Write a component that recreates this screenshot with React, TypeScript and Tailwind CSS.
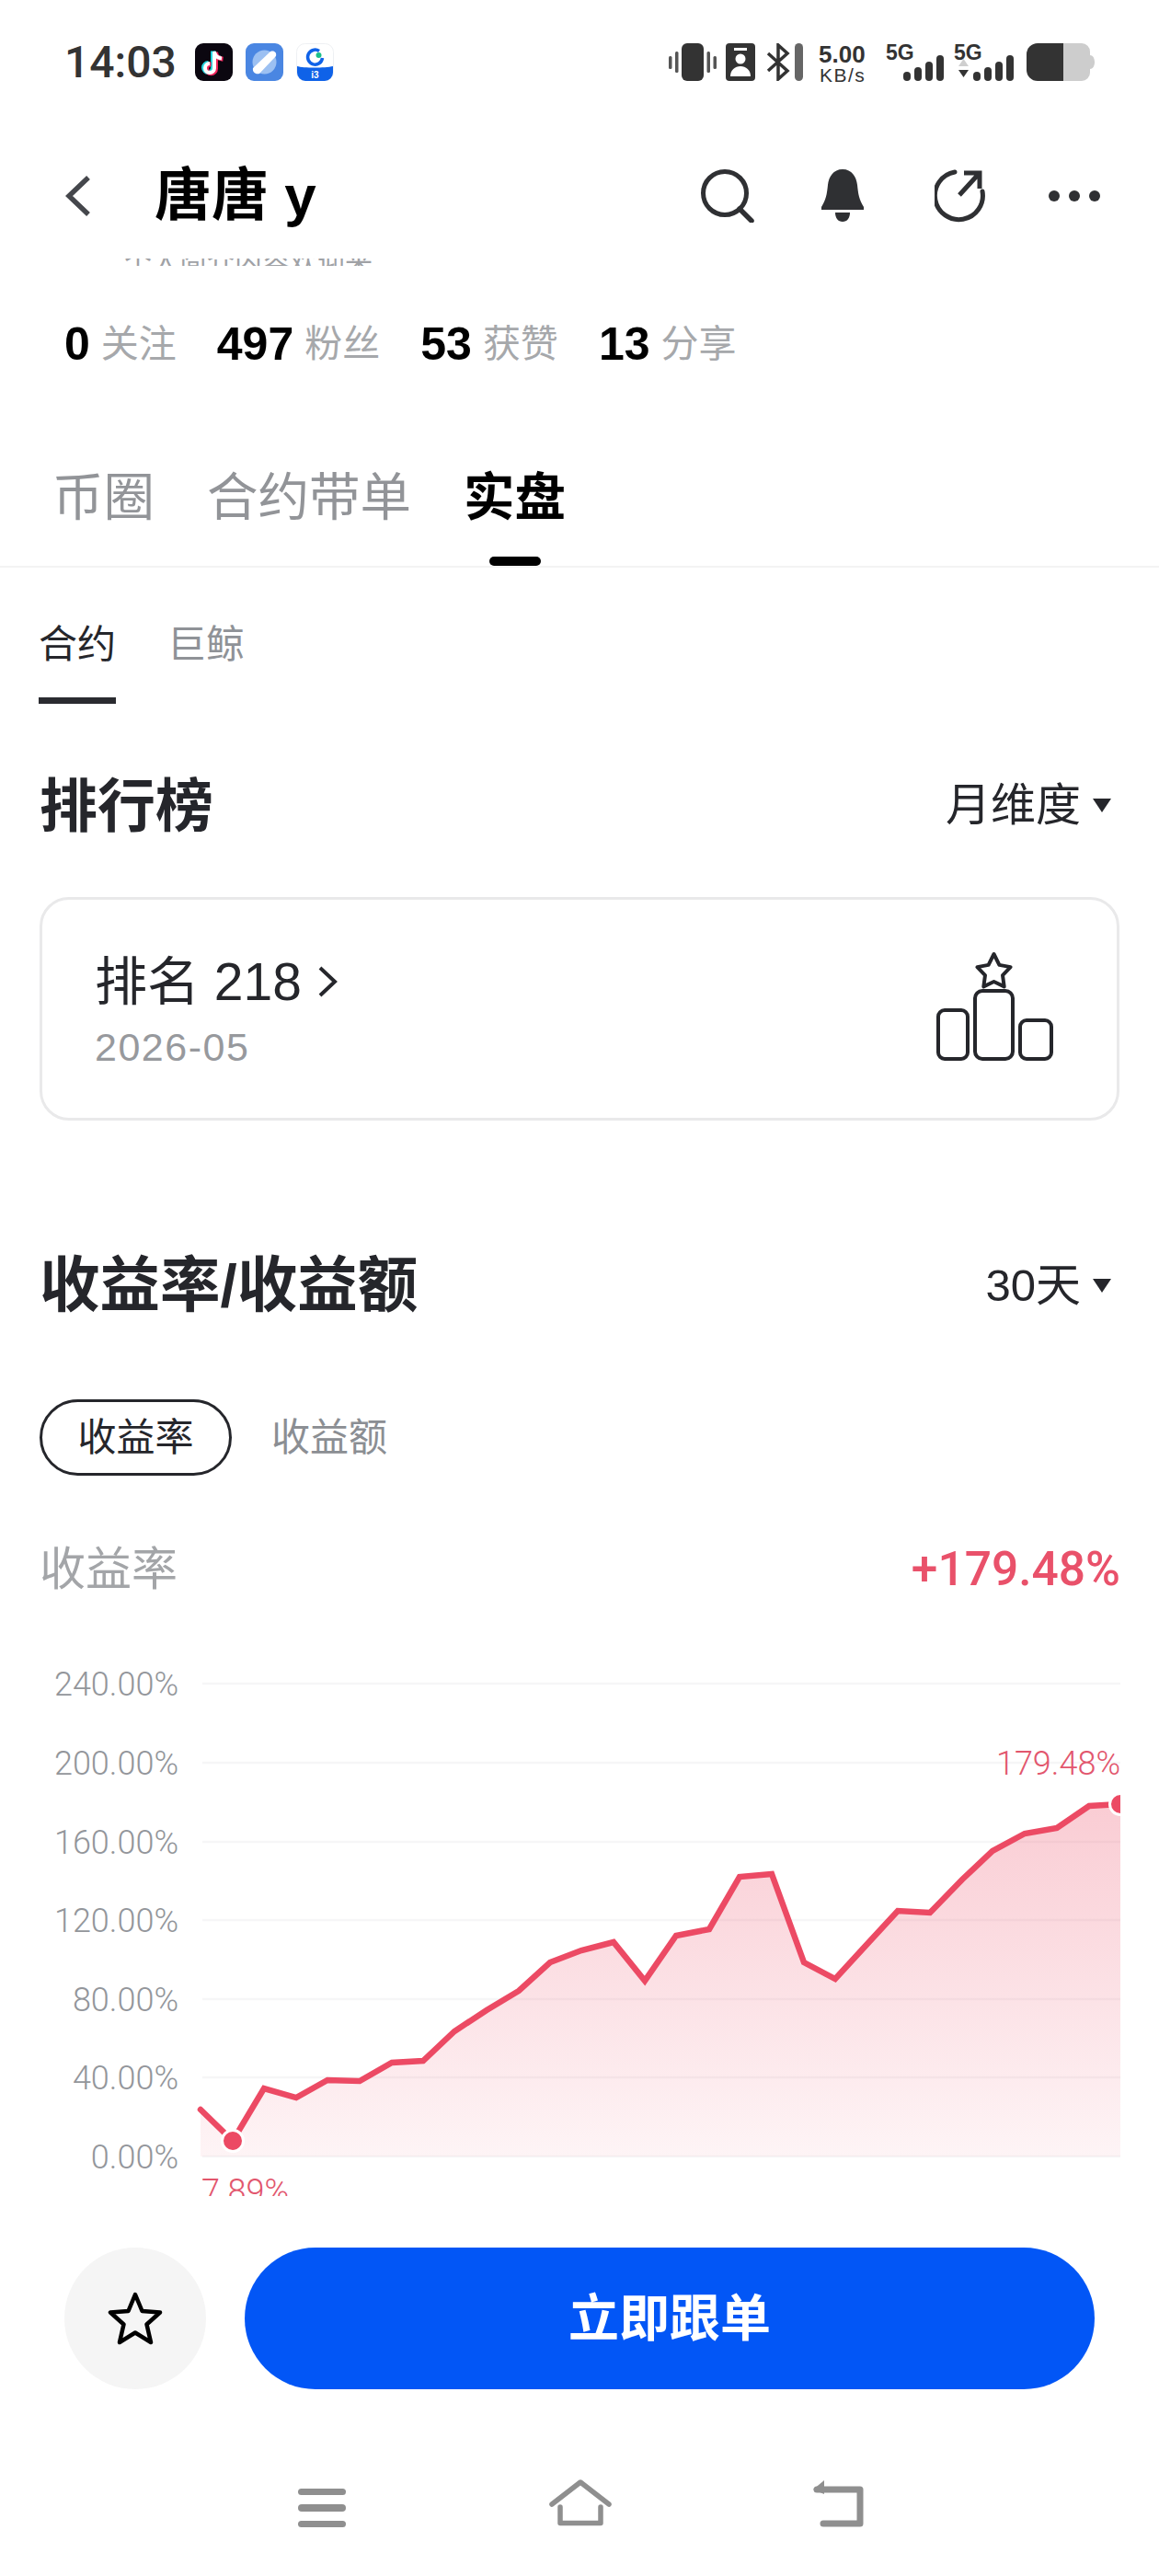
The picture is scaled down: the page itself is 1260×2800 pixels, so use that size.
import type { ReactNode } from 'react';

const points: [number, number][] = [
  [218, 2293], [253, 2327], [287, 2270], [322, 2280], [356, 2261], [391, 2262], [426, 2242], [460, 2240],
  [494, 2208], [529, 2185], [564, 2164], [598, 2133], [632, 2120], [667, 2111], [701, 2153], [735, 2104],
  [771, 2097], [804, 2040], [839, 2037], [874, 2133], [908, 2151], [941, 2115], [976, 2077], [1011, 2079],
  [1046, 2043], [1079, 2012], [1114, 1993], [1149, 1987], [1184, 1963], [1218, 1961],
];

const axis: [string, number][] = [
  ['240.00%', 1830], ['200.00%', 1916], ['160.00%', 2002], ['120.00%', 2087],
  ['80.00%', 2173], ['40.00%', 2258], ['0.00%', 2344],
];

function Chart() {
  const line = points.map((p) => p.join(',')).join(' ');
  const area = `218,2344 ${line} 1218,2344`;
  return (
    <svg width={1260} height={587} viewBox="0 1800 1260 587" className="block">
      <defs>
        <linearGradient id="area" gradientUnits="userSpaceOnUse" x1="0" y1="1961" x2="0" y2="2344">
          <stop offset="0" stopColor="#ec4a64" stopOpacity="0.28" />
          <stop offset="1" stopColor="#ec4a64" stopOpacity="0.06" />
        </linearGradient>
        <clipPath id="plot">
          <rect x="200" y="1800" width="1018" height="587" />
        </clipPath>
      </defs>
      {axis.map(([label, y]) => (
        <g key={label}>
          <line x1="220" x2="1218" y1={y} y2={y} stroke="#f6f6f7" strokeWidth="2.5" />
          <text x="194" y={y + 13} textAnchor="end" fontFamily="Roboto, sans-serif" fontWeight="300" fontSize="36" fill="#93969b">
            {label}
          </text>
        </g>
      ))}
      <polygon points={area} fill="url(#area)" />
      <g clipPath="url(#plot)">
        <polyline points={line} fill="none" stroke="#ec4a64" strokeWidth="6.5" strokeLinejoin="miter" strokeLinecap="round" />
        <circle cx="253" cy="2327" r="11.5" fill="#ec4a64" stroke="#fff" strokeWidth="3" />
        <circle cx="1218" cy="1961" r="11.5" fill="#ec4a64" stroke="#fff" strokeWidth="3" />
      </g>
      <text x="1218" y="1929" textAnchor="end" fontFamily="Roboto, sans-serif" fontWeight="300" fontSize="36" fill="#e2566d">
        179.48%
      </text>
      <text x="219" y="2394" fontFamily="Roboto, sans-serif" fontWeight="300" fontSize="36" fill="#e2566d">
        7.89%
      </text>
    </svg>
  );
}

function AppIcons() {
  return (
    <div className="flex gap-[14px] ml-[20px]">
      <svg width="41" height="41" viewBox="0 0 41 41">
        <rect width="41" height="41" rx="9" fill="#0b0710" />
        <path d="M21 9v18a5 5 0 1 1-5-5M21 9c.5 4.500 3.500 7 8 7.500" fill="none" stroke="#25d6e0" strokeWidth="5" transform="translate(-1.500 -.5)" />
        <path d="M21 9v18a5 5 0 1 1-5-5M21 9c.5 4.500 3.500 7 8 7.500" fill="none" stroke="#f0245c" strokeWidth="5" transform="translate(1.500 .8)" />
        <path d="M21 9v18a5 5 0 1 1-5-5M21 9c.5 4.500 3.500 7 8 7.500" fill="none" stroke="#fff" strokeWidth="4" />
      </svg>
      <svg width="41" height="41" viewBox="0 0 41 41">
        <rect width="41" height="41" rx="9" fill="#4a86e2" />
        <circle cx="20.500" cy="20.500" r="13" fill="#9cc0f2" />
        <path d="M8 27 27 9c4-1.500 7 1 6 5L15 33c-4 1.500-8-2-7-6Z" fill="#fff" />
      </svg>
      <svg width="41" height="41" viewBox="0 0 41 41">
        <rect x=".5" y=".5" width="40" height="40" rx="9" fill="#fff" stroke="#eef0f3" />
        <path d="M1 25c7 2 30 2 39 0v7a9 9 0 0 1-9 9H10a9 9 0 0 1-9-9Z" fill="#0f62e8" />
        <path d="M25 8.500a8 8 0 1 0 3.500 7.500" fill="none" stroke="#0f62e8" strokeWidth="3.500" />
        <circle cx="24.500" cy="13" r="3" fill="#1cc08a" />
        <text x="20.500" y="38" textAnchor="middle" fontSize="10" fontWeight="700" fill="#fff" fontFamily="Liberation Sans, sans-serif">i3</text>
      </svg>
    </div>
  );
}

function Bars({ up }: { up?: boolean }) {
  return (
    <svg width="62" height="28" viewBox="0 0 62 28">
      {up && <path d="M1 12h11L6.500 4Z" fill="#cfcfcf" />}
      {up && <path d="M1 16h11l-5.500 8Z" fill="#333" />}
      <rect x="17" y="18" width="8" height="10" rx="4" fill="#333" />
      <rect x="29" y="13" width="8" height="15" rx="4" fill="#333" />
      <rect x="41" y="7" width="8" height="21" rx="4" fill="#333" />
      <rect x="53" y="0" width="8" height="28" rx="4" fill="#333" />
    </svg>
  );
}

function Signal({ up, shift, textLeft }: { up?: boolean; shift: string; textLeft: string }) {
  return (
    <div className={`relative w-[66px] h-[41px] ${shift}`}>
      <span className={`absolute top-[-2px] text-[23px] leading-[24px] font-bold text-[#333] ${textLeft}`}>5G</span>
      <div className="absolute right-0 bottom-0">
        <Bars up={up} />
      </div>
    </div>
  );
}

function StatusBar() {
  return (
    <div className="h-[148px] pt-[47px] pl-[70px] pr-[70px] flex items-start justify-between">
      <div className="flex items-center h-[41px]">
        <span className="text-[48px] leading-[41px] font-medium text-[#333] font-['Roboto',sans-serif]">14:03</span>
        <AppIcons />
      </div>
      <div className="flex items-start h-[41px]">
        <svg width="52" height="41" viewBox="0 0 52 41">
          <rect x="14" y="0" width="24" height="41" rx="6" fill="#333" />
          <rect x="0" y="14" width="3.500" height="14" rx="1.500" fill="#555" />
          <rect x="7" y="9" width="3.500" height="23" rx="1.500" fill="#555" />
          <rect x="41.500" y="9" width="3.500" height="23" rx="1.500" fill="#555" />
          <rect x="48.500" y="14" width="3.500" height="14" rx="1.500" fill="#555" />
        </svg>
        <svg width="32" height="41" viewBox="0 0 32 41" className="ml-[10px]">
          <rect width="32" height="41" rx="4" fill="#333" />
          <rect x="9" y="5" width="14" height="3" fill="#fff" />
          <circle cx="16" cy="17" r="5.500" fill="#fff" />
          <path d="M5 36c0-7 5-11 11-11s11 4 11 11Z" fill="#fff" />
        </svg>
        <svg width="40" height="41" viewBox="0 0 40 41" className="ml-[12px]">
          <path d="M2 11 23 30 13 39V2l10 9L2 30" fill="none" stroke="#333" strokeWidth="3.500" />
          <rect x="31" y="0" width="9" height="41" rx="4.500" fill="#666" />
        </svg>
        <div className="ml-[17px] w-[56px] text-[#333]">
          <div className="text-[26px] leading-[24px] font-bold">5.00</div>
          <div className="text-[21px] leading-[20px] tracking-[1.5px] mt-[1px] ml-[1px] whitespace-nowrap">KB/s</div>
        </div>
        <Signal shift="ml-[15px]" textLeft="left-[2px]" />
        <Signal up shift="ml-[10px]" textLeft="left-0" />
        <svg width="74" height="41" viewBox="0 0 74 41" className="ml-[13px]">
          <path d="M40 0h20a9 9 0 0 1 9 9v4c3 0 5 3 5 7.500S72 28 69 28v4a9 9 0 0 1-9 9H40Z" fill="#cdcdcd" />
          <path d="M12 0h28v41H12A12 12 0 0 1 0 29V12A12 12 0 0 1 12 0Z" fill="#333" />
        </svg>
      </div>
    </div>
  );
}

function NavBar() {
  return (
    <div className="h-[130px] pl-[70px] pr-[64px] flex items-center">
      <svg width="30" height="46" viewBox="0 0 30 46">
        <path d="M26 3 5 23l21 20" fill="none" stroke="#45474c" strokeWidth="5.500" />
      </svg>
      <div className="ml-[68px] text-[62px] leading-[70px] font-bold text-black">唐唐 y</div>
      <div className="ml-auto flex items-center">
        <svg width="60" height="58" viewBox="0 0 60 58">
          <circle cx="27" cy="26" r="23.500" fill="none" stroke="#2f3033" strokeWidth="5" />
          <path d="M43 43 56 56" stroke="#2f3033" strokeWidth="5.500" strokeLinecap="round" />
        </svg>
        <svg width="52" height="58" viewBox="0 0 52 58" className="ml-[69px]">
          <path d="M26 0c10 0 15 8 16 17 1 10 2 16 7 24v3H3v-3c5-8 6-14 7-24C11 8 16 0 26 0Z" fill="#2f3033" />
          <path d="M18 47h16c0 6-3 10-8 10s-8-4-8-10Z" fill="#2f3033" />
        </svg>
        <svg width="60" height="58" viewBox="0 0 60 58" className="ml-[74px]">
          <path d="M52 24a26 26 0 1 1-30-21" fill="none" stroke="#2f3033" strokeWidth="5" strokeLinecap="round" />
          <path d="M27 28 48 5M32 4h17v17" fill="none" stroke="#2f3033" strokeWidth="5" />
        </svg>
        <div className="ml-[64px] flex gap-[10px]">
          <span className="w-[12px] h-[12px] rounded-full bg-[#2f3033]" />
          <span className="w-[12px] h-[12px] rounded-full bg-[#2f3033]" />
          <span className="w-[12px] h-[12px] rounded-full bg-[#2f3033]" />
        </div>
      </div>
    </div>
  );
}

function Stat({ num, label }: { num: string; label: string }) {
  return (
    <div className="flex items-center gap-[12px]">
      <span className="text-[50px] leading-[60px] font-bold text-black">{num}</span>
      <span className="text-[41px] leading-[60px] text-[#a6a8ab]">{label}</span>
    </div>
  );
}

function SectionHead({ title, size, right }: { title: string; size: string; right: ReactNode }) {
  return (
    <div className="h-[60px] pl-[43px] pr-[52px] flex items-center justify-between">
      <div className={`${size} leading-[60px] font-bold text-[#25262b]`}>{title}</div>
      <div className="flex items-center gap-[13px] pb-[2px] text-[49px] leading-[60px] text-[#25262b]">
        {right}
        <span className="w-0 h-0 border-x-[10px] border-x-transparent border-t-[15px] border-t-[#25262b]" />
      </div>
    </div>
  );
}

export default function App() {
  return (
    <div className="w-[1260px] h-[2800px] overflow-hidden bg-white font-['Liberation_Sans','Noto_Sans_CJK_SC',sans-serif]">
      <StatusBar />
      <NavBar />

      {/* profile text scrolled under the nav, only the bottom shows */}
      <div className="mt-[3px] h-[8px] overflow-hidden pl-[135px] flex items-end">
        <div className="text-[30px] leading-[8px] text-[#a0a2a6] whitespace-nowrap">个人简介内容欢迎来</div>
      </div>

      <div className="h-[169px] pl-[70px] flex items-center gap-[44px]">
        <Stat num="0" label="关注" />
        <Stat num="497" label="粉丝" />
        <Stat num="53" label="获赞" />
        <Stat num="13" label="分享" />
      </div>

      <div className="relative h-[159px] pt-[53px] pl-[57px] border-b-[2px] border-b-[#f3f3f3] flex items-start gap-[57px] text-[55.500px] leading-[60px] text-[#929498]">
        <span>币圈</span>
        <span>合约带单</span>
        <span className="font-bold text-black">实盘</span>
        <span className="absolute left-[532px] bottom-0 w-[56px] h-[10px] rounded-full bg-black" />
      </div>

      <div className="h-[148px] pl-[42px] flex items-start gap-[56px] text-[42px] leading-[60px]">
        <span className="h-[148px] pt-[54px] border-b-[7px] border-b-[#2a2b30] text-[#25262b]">合约</span>
        <span className="pt-[54px] text-[#8f9297]">巨鲸</span>
      </div>

      <div className="mt-[81px]">
        <SectionHead title="排行榜" size="text-[63px]" right="月维度" />
      </div>

      <div className="mt-[69px] mx-[43px] h-[243px] rounded-[32px] border-[3px] border-[#e9e9ea] pl-[57px] pr-[68px] flex items-center justify-between">
        <div>
          <div className="flex items-center mt-[3px] text-[57px] leading-[66px] text-[#25262b]">
            <span>排名 218</span>
            <svg width="24" height="34" viewBox="0 0 24 34" className="ml-[16px]">
              <path d="M4 2 20 17 4 32" fill="none" stroke="#25262b" strokeWidth="4" />
            </svg>
          </div>
          <div className="mt-[14px] text-[43px] leading-[48px] tracking-[1.5px] text-[#97999d]">2026-05</div>
        </div>
        <svg width="128" height="120" viewBox="0 0 128 120" className="mt-[-7px]">
          <g fill="none" stroke="#25262b" strokeWidth="4">
            <rect x="2" y="65" width="32" height="53" rx="7" />
            <rect x="42" y="44" width="41" height="74" rx="8" />
            <rect x="91" y="76" width="34" height="42" rx="7" />
            <path d="M62.500 4 68.400 15.900 80.600 18.100 72 27.100 73.700 39.400 62.500 34 51.300 39.400 53 27.100 44.400 18.100 56.600 15.900Z" strokeLinejoin="round" />
          </g>
        </svg>
      </div>

      <div className="mt-[150px]">
        <SectionHead title="收益率/收益额" size="text-[65.500px]" right="30天" />
      </div>

      <div className="mt-[93px] pl-[43px] flex items-center gap-[43px] text-[42px] leading-[50px]">
        <span className="h-[83px] w-[209px] rounded-full border-[3px] border-[#25262b] flex items-center justify-center text-[#25262b]">收益率</span>
        <span className="text-[#8b8e93]">收益额</span>
      </div>

      <div className="mt-[72px] h-[60px] pl-[43px] pr-[42px] flex items-center justify-between">
        <span className="text-[50px] leading-[60px] text-[#a3a5a8]">收益率</span>
        <span className="text-[51.500px] leading-[60px] font-medium text-[#e9516a] font-['Roboto',sans-serif]">+179.48%</span>
      </div>

      <div className="mt-[64px]">
        <Chart />
      </div>

      <div className="pt-[56px] pl-[70px] pr-[70px] flex items-center gap-[42px]">
        <div className="w-[154px] h-[154px] rounded-full bg-[#f5f5f5] flex items-center justify-center shrink-0">
          <svg width="60" height="58" viewBox="0 0 60 58">
            <path d="M30 3 37.500 21 57 22.500 42.500 35.500 47 55 30 44.500 13 55 17.500 35.500 3 22.500 22.500 21Z" fill="none" stroke="#000" strokeWidth="4.500" strokeLinejoin="round" />
          </svg>
        </div>
        <div className="flex-1 h-[154px] rounded-full bg-[#0256f6] flex items-center justify-center text-[55px] font-bold text-white">立即跟单</div>
      </div>

      <div className="mt-[98px] pl-[324px] flex items-end">
        <div className="w-[52px] h-[42px] flex flex-col justify-between">
          <span className="h-[7px] rounded-full bg-[#8f8f8f]" />
          <span className="h-[8px] rounded-full bg-[#8f8f8f]" />
          <span className="h-[7px] rounded-full bg-[#8f8f8f]" />
        </div>
        <svg width="68" height="52" viewBox="0 0 68 52" className="ml-[221px]">
          <path d="M3 27 34 3l31 24M12 30v17.500h44V30" fill="none" stroke="#8f8f8f" strokeWidth="5.500" strokeLinecap="round" strokeLinejoin="round" />
        </svg>
        <svg width="56" height="52" viewBox="0 0 56 52" className="ml-[218px]">
          <path d="M5 11h47v37H12" fill="none" stroke="#8f8f8f" strokeWidth="7" strokeLinecap="round" strokeLinejoin="round" />
          <path d="M13 1 1 11l12 5Z" fill="#8f8f8f" />
        </svg>
      </div>
    </div>
  );
}
